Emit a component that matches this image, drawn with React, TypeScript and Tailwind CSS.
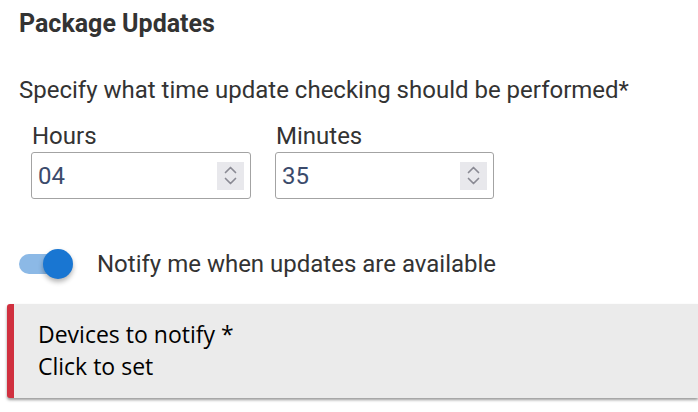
import { useState } from 'react';

function Spinner() {
  return (
    <div className="w-[27px] h-[28px] bg-[#e8e8ec] flex flex-col items-center justify-center gap-[3px]">
      <svg width="13" height="8" viewBox="0 0 13 8" fill="none" stroke="#8a8a94" strokeWidth="1.7" strokeLinecap="round" strokeLinejoin="round">
        <path d="M1.5 6.5 L6.5 1.5 L11.5 6.5" />
      </svg>
      <svg width="13" height="8" viewBox="0 0 13 8" fill="none" stroke="#8a8a94" strokeWidth="1.7" strokeLinecap="round" strokeLinejoin="round">
        <path d="M1.5 1.5 L6.5 6.5 L11.5 1.5" />
      </svg>
    </div>
  );
}

function TimeField({ label, value, width }: { label: string; value: string; width: string }) {
  return (
    <div className="flex flex-col">
      <label className="pl-[1px] text-[24px] leading-[28px] text-[#333]">{label}</label>
      <div className={`${width} mt-[2px] h-[47px] border border-[#a3a3a3] rounded-[3px] flex items-center justify-between pl-[6px] pr-[6px]`}>
        <span className="text-[24px] leading-[28px] text-[#3b4a6b]">{value}</span>
        <Spinner />
      </div>
    </div>
  );
}

export default function App() {
  const [notify, setNotify] = useState(true);

  return (
    <div className="w-[698px] h-[412px] bg-white overflow-hidden font-['Roboto',sans-serif]">
      <div className="pl-[19px] pt-[10px]">
        <h2 className="text-[25px] leading-[28px] font-bold text-[#333]">Package Updates</h2>

        <p className="mt-[38px] text-[24px] leading-[28px] text-[#333]">
          Specify what time update checking should be performed*
        </p>

        {/* Time inputs */}
        <div className="mt-[18px] pl-[12px] flex gap-[24px]">
          <TimeField label="Hours" value="04" width="w-[220px]" />
          <TimeField label="Minutes" value="35" width="w-[219px]" />
        </div>

        {/* Notify switch */}
        <div className="mt-[50px] flex items-center">
          <button
            className="relative w-[54px] h-[30px] flex items-center"
            onClick={() => setNotify(!notify)}
            aria-label="Notify toggle"
          >
            <span className={`w-[48px] h-[20px] rounded-full ${notify ? 'bg-[#8cb9e6]' : 'bg-[#bdbdbd]'}`} />
            <span
              className={`absolute top-0 ${notify ? 'left-[24px]' : 'left-0'} w-[30px] h-[30px] rounded-full ${notify ? 'bg-[#1976d2]' : 'bg-[#f5f5f5]'} shadow-[0_3px_5px_rgba(0,0,0,0.3)]`}
            />
          </button>
          <span className="ml-[24px] text-[24px] leading-[28px] text-[#333]">
            Notify me when updates are available
          </span>
        </div>
      </div>

      {/* Devices card */}
      <div className="mt-[25px] ml-[7px] h-[94px] bg-[#ebebeb] border-l-[7px] border-[#d0303f] rounded-l-[3px] shadow-[0_2px_3px_rgba(0,0,0,0.4)] pl-[24px] pt-[14px] font-['Open_Sans',sans-serif] text-[23px] leading-[32px] text-black">
        <div>Devices to notify *</div>
        <div>Click to set</div>
      </div>
    </div>
  );
}
